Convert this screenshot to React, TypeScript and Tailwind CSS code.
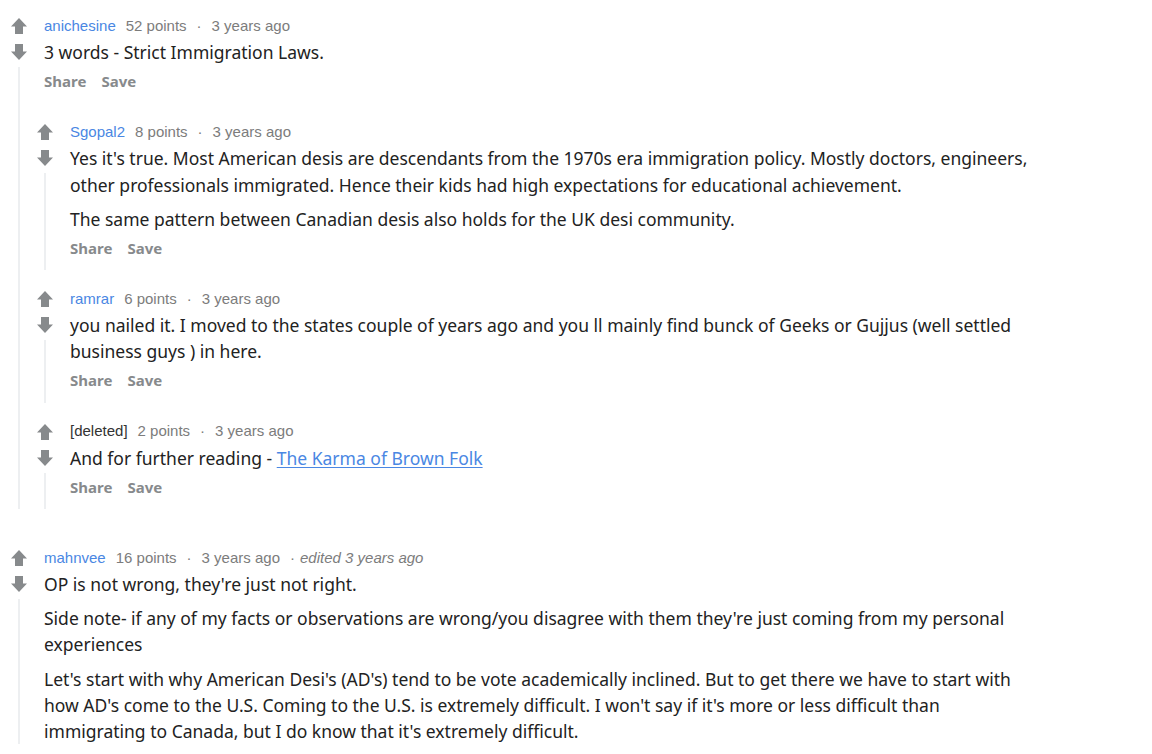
import type { ReactNode } from "react";

type CommentData = {
  author: string;
  deleted?: boolean;
  points: string;
  age: string;
  edited?: string;
  body: ReactNode[];
  replies?: CommentData[];
  noActions?: boolean;
};

const THREAD: CommentData[] = [
  {
    author: "anichesine",
    points: "52 points",
    age: "3 years ago",
    body: ["3 words - Strict Immigration Laws."],
    replies: [
      {
        author: "Sgopal2",
        points: "8 points",
        age: "3 years ago",
        body: [
          "Yes it's true. Most American desis are descendants from the 1970s era immigration policy. Mostly doctors, engineers, other professionals immigrated. Hence their kids had high expectations for educational achievement.",
          "The same pattern between Canadian desis also holds for the UK desi community.",
        ],
      },
      {
        author: "ramrar",
        points: "6 points",
        age: "3 years ago",
        body: [
          "you nailed it. I moved to the states couple of years ago and you ll mainly find bunck of Geeks or Gujjus (well settled business guys ) in here.",
        ],
      },
      {
        author: "[deleted]",
        deleted: true,
        points: "2 points",
        age: "3 years ago",
        body: [
          <>
            And for further reading -{" "}
            <a href="#" className="text-[#4a87e3] underline underline-offset-2">
              The Karma of Brown Folk
            </a>
          </>,
        ],
      },
    ],
  },
  {
    author: "mahnvee",
    points: "16 points",
    age: "3 years ago",
    edited: "edited 3 years ago",
    noActions: true,
    body: [
      "OP is not wrong, they're just not right.",
      "Side note- if any of my facts or observations are wrong/you disagree with them they're just coming from my personal experiences",
      "Let's start with why American Desi's (AD's) tend to be vote academically inclined. But to get there we have to start with how AD's come to the U.S. Coming to the U.S. is extremely difficult. I won't say if it's more or less difficult than immigrating to Canada, but I do know that it's extremely difficult.",
    ],
  },
];

function VoteArrow({ down }: { down?: boolean }) {
  return (
    <svg
      width="16"
      height="16"
      viewBox="0 0 16 16"
      className={down ? "rotate-180" : ""}
      fill="#878a8c"
    >
      <path d="M8 0 L16 8.5 H12 V16 H4 V8.5 H0 Z" />
    </svg>
  );
}

function Comment({ c }: { c: CommentData }) {
  return (
    <div className="flex">
      <div className="flex w-[26px] shrink-0 flex-col items-center">
        <div className="mt-[3px]">
          <VoteArrow />
        </div>
        <div className="mt-[10px]">
          <VoteArrow down />
        </div>
        <div className="mt-[7px] w-[2px] flex-1 bg-[#edeff1]" />
      </div>

      <div className="ml-[12px] min-w-0 flex-1">
        <div className="mt-[1px] flex h-[20px] items-center whitespace-nowrap font-['Liberation_Sans',Arial,sans-serif] text-[15px] text-[#7c7c7c]">
          <span className={c.deleted ? "text-[#333333]" : "text-[#4a87e3]"}>{c.author}</span>
          <span className="ml-[10px]">{c.points}</span>
          <span className="mx-[10px]">·</span>
          <span>{c.age}</span>
          {c.edited && (
            <>
              <span className="ml-[10px] mr-[5px]">·</span>
              <span className="italic">{c.edited}</span>
            </>
          )}
        </div>

        <div className="mt-[3px] flex flex-col gap-[8px] font-['Noto_Sans',sans-serif] text-[17.5px] leading-[26.25px] text-[#222222]">
          {c.body.map((p, i) => (
            <p key={i}>{p}</p>
          ))}
        </div>

        {!c.noActions && (
          <div className="mt-[6px] flex h-[20px] items-center gap-[15px] font-['Noto_Sans',sans-serif] text-[15px] font-bold text-[#878a8c]">
            <span>Share</span>
            <span>Save</span>
          </div>
        )}
        {!c.noActions && <div className="h-[12px]" />}

        {c.replies && (
          <div className="-ml-[12px] flex flex-col">
            {c.replies.map((r) => (
              <div key={r.author} className="mt-[18px]">
                <Comment c={r} />
              </div>
            ))}
          </div>
        )}
      </div>
    </div>
  );
}

export default function App() {
  return (
    <div className="min-h-screen w-full bg-white">
      <div className="w-[1040px] pl-[6px] pt-[15px]">
        {THREAD.map((c, i) => (
          <div key={c.author} className={i === 0 ? "" : "mt-[38px]"}>
            <Comment c={c} />
          </div>
        ))}
      </div>
    </div>
  );
}
